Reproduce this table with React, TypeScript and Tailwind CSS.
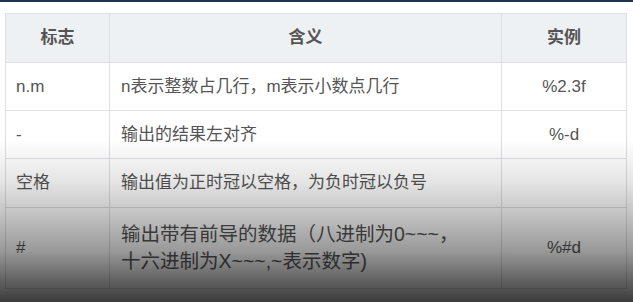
import React from 'react';

const rows = [
  { flag: 'n.m', meaning: 'n表示整数占几行，m表示小数点几行', example: '%2.3f', h: 'h-[48px]' },
  { flag: '-', meaning: '输出的结果左对齐', example: '%-d', h: 'h-[48px]' },
  { flag: '空格', meaning: '输出值为正时冠以空格，为负时冠以负号', example: '', h: 'h-[49px]' },
];

const cell = 'border border-[#dcdfe3] text-[17px] text-[#555]';

export default function App() {
  return (
    <div className="relative w-[633px] h-[302px] overflow-hidden bg-white font-['Liberation_Sans','Noto_Sans_CJK_SC',sans-serif]">
      <div className="h-[2px] bg-[#1f3050]" />
      <div className="pt-[11px] pl-[5px]">
        <table className="w-[621px] table-fixed border-collapse">
          <colgroup>
            <col className="w-[104px]" />
            <col className="w-[392px]" />
            <col className="w-[125px]" />
          </colgroup>
          <thead>
            <tr className="h-[49px] bg-[#eef1f4]">
              <th className={`${cell} font-bold text-[#444]`}>标志</th>
              <th className={`${cell} font-bold text-[#444]`}>含义</th>
              <th className={`${cell} font-bold text-[#444]`}>实例</th>
            </tr>
          </thead>
          <tbody>
            {rows.map((r) => (
              <tr key={r.flag} className={r.h}>
                <td className={`${cell} pl-[10px]`}>{r.flag}</td>
                <td className={`${cell} pl-[11px]`}>{r.meaning}</td>
                <td className={`${cell} text-center`}>{r.example}</td>
              </tr>
            ))}
            <tr className="h-[81px]">
              <td className={`${cell} pl-[10px]`}>#</td>
              <td className={`${cell} pl-[11px] text-[19.5px] leading-[27px]`}>
                输出带有前导的数据（八进制为0~~~，
                <br />
                十六进制为X~~~,~表示数字)
              </td>
              <td className={`${cell} text-center`}>%#d</td>
            </tr>
          </tbody>
        </table>
      </div>
      <div className="pointer-events-none absolute inset-0 bg-[linear-gradient(to_bottom,rgba(0,0,0,0)_46%,rgba(0,0,0,0.1)_60%,rgba(0,0,0,0.25)_72%,rgba(0,0,0,0.4)_83%,rgba(0,0,0,0.62)_93%,rgba(0,0,0,0.77)_100%)]" />
    </div>
  );
}
